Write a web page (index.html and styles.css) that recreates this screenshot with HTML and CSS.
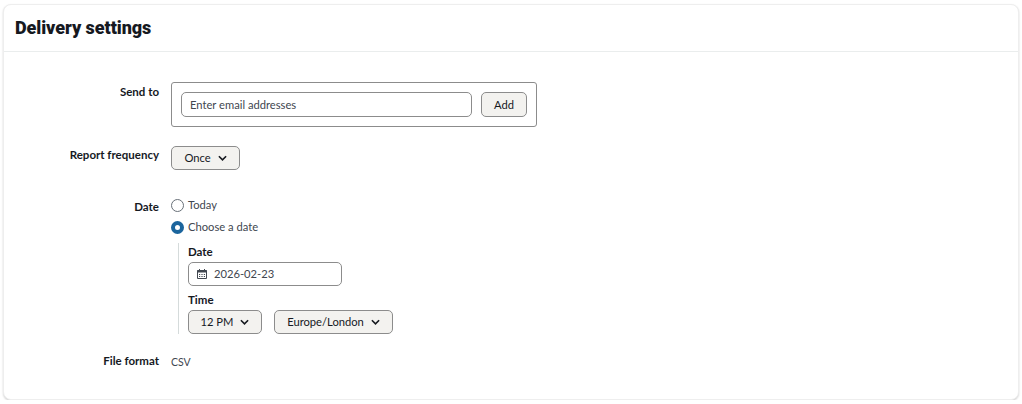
FILE: index.html
```html
<!DOCTYPE html>
<html lang="en">
<head>
<meta charset="utf-8">
<title>Delivery settings</title>
<link rel="stylesheet" href="styles.css">
</head>
<body>
<section class="card">
  <header class="card-header"><h2 class="card-title">Delivery settings</h2></header>
  <div class="form">
    <div class="row row-send">
      <div class="label">Send to</div>
      <div class="send-box">
        <div class="input email">Enter email addresses</div>
        <button class="btn btn-add" type="button">Add</button>
      </div>
    </div>
    <div class="row row-frequency">
      <div class="label">Report frequency</div>
      <button class="btn btn-once" type="button">Once
        <svg class="chev" viewBox="0 0 10 6" width="9" height="6"><path d="M1 1l4 4 4-4" fill="none" stroke="#16191f" stroke-width="1.8"/></svg>
      </button>
    </div>
    <div class="row row-date">
      <div class="label label-date">Date</div>
      <div class="date-col">
        <div class="radio-line"><span class="radio"></span>Today</div>
        <div class="radio-line"><span class="radio radio-on"></span>Choose a date</div>
        <div class="sub">
          <div class="sub-label">Date</div>
          <div class="input date-input">
            <svg class="cal" viewBox="0 0 10 10" width="10" height="10"><path d="M.5 1.5h9v8h-9z" fill="none" stroke="#414750"/><path d="M.5 1h9v2.6h-9zM2 0h1v1.5H2zM7 0h1v1.5H7z" fill="#414750"/><path d="M2 5h1.2v1H2zM4.4 5h1.2v1H4.4zM6.8 5H8v1H6.8zM2 7h1.2v1H2zM4.4 7h1.2v1H4.4zM6.8 7H8v1H6.8z" fill="#414750"/></svg>
            2026-02-23
          </div>
          <div class="sub-label sub-time">Time</div>
          <div class="time-row">
            <button class="btn btn-hour" type="button">12 PM
              <svg class="chev" viewBox="0 0 10 6" width="9" height="6"><path d="M1 1l4 4 4-4" fill="none" stroke="#16191f" stroke-width="1.8"/></svg>
            </button>
            <button class="btn btn-zone" type="button">Europe/London
              <svg class="chev" viewBox="0 0 10 6" width="9" height="6"><path d="M1 1l4 4 4-4" fill="none" stroke="#16191f" stroke-width="1.8"/></svg>
            </button>
          </div>
        </div>
      </div>
    </div>
    <div class="row row-format">
      <div class="label">File format</div>
      <div class="value">CSV</div>
    </div>
  </div>
</section>
</body>
</html>
```
FILE: styles.css
```css
* { box-sizing: border-box; }
html, body { margin: 0; padding: 0; background: #fff; }
body {
  font-family: Lato, "Noto Sans", sans-serif;
  font-size: 11.2px;
  line-height: 14px;
  color: #16191f;
  overflow: hidden;
}
.card {
  margin: 4px 3px 0;
  height: 396px;
  border: 1px solid #eeeeee;
  border-radius: 8px;
  box-shadow: 0 1px 2px rgba(0, 0, 0, .18);
  background: #fff;
}
.card-header {
  height: 47px;
  padding: 12px 11px 0;
  border-bottom: 1px solid #eaeded;
}
.card-title {
  margin: 0;
  font-family: Roboto, "Liberation Sans", sans-serif;
  font-size: 18px;
  line-height: 22px;
  font-weight: 900;
  letter-spacing: -0.06px;
  color: #16191f;
}
.form { padding-top: 30px; }
.row {
  display: grid;
  grid-template-columns: 155px 1fr;
  column-gap: 12px;
}
.label {
  text-align: right;
  font-size: 11.5px;
  font-weight: 700;
  padding-top: 3px;
}
.send-box {
  width: 366px;
  height: 45px;
  padding: 9px;
  display: flex;
  gap: 9px;
  border: 1px solid #8c8c8c;
  border-radius: 3px;
}
.input {
  height: 25px;
  border: 1px solid #8c8c8c;
  border-radius: 5px;
  background: #fff;
  color: #414750;
  display: flex;
  align-items: center;
}
.email { width: 291px; padding-left: 8px; }
.btn {
  height: 25px;
  padding: 0;
  border: 1px solid #8c8c8c;
  border-radius: 5px;
  background: #f3f2ef;
  color: #16191f;
  font: inherit;
  display: inline-flex;
  align-items: center;
  justify-content: center;
  gap: 7px;
}
.btn-add { width: 46px; }
.row-frequency { margin-top: 19px; }
.row-frequency .label { padding-top: 2px; }
.btn-once { width: 69px; height: 24px; }
.row-date { margin-top: 24px; }
.label-date { padding-top: 6px; }
.date-col { display: flex; flex-direction: column; }
.radio-line {
  height: 22px;
  display: flex;
  align-items: center;
  gap: 4px;
  color: #414750;
}
.radio {
  width: 13px;
  height: 13px;
  border: 1px solid #687078;
  border-radius: 50%;
  background: #fff;
}
.radio-on { border: 4px solid #1b659d; }
.sub {
  margin: 5px 0 0 7px;
  padding: 2px 0 0 9px;
  border-left: 1px solid #d5dbdb;
}
.sub-label { font-size: 11.5px; font-weight: 700; height: 14px; margin-bottom: 3px; }
.date-input {
  width: 154px;
  height: 24px;
  padding-left: 8px;
  gap: 7px;
}
.sub-time { margin-top: 7px; margin-bottom: 3px; }
.time-row { display: flex; gap: 12px; }
.btn-hour { width: 74px; height: 24px; }
.btn-zone { width: 119px; height: 24px; }
.row-format { margin-top: 18px; }
.row-format .label { padding-top: 2px; }
.value { padding-top: 3px; color: #414750; font-size: 10.5px; }
```
